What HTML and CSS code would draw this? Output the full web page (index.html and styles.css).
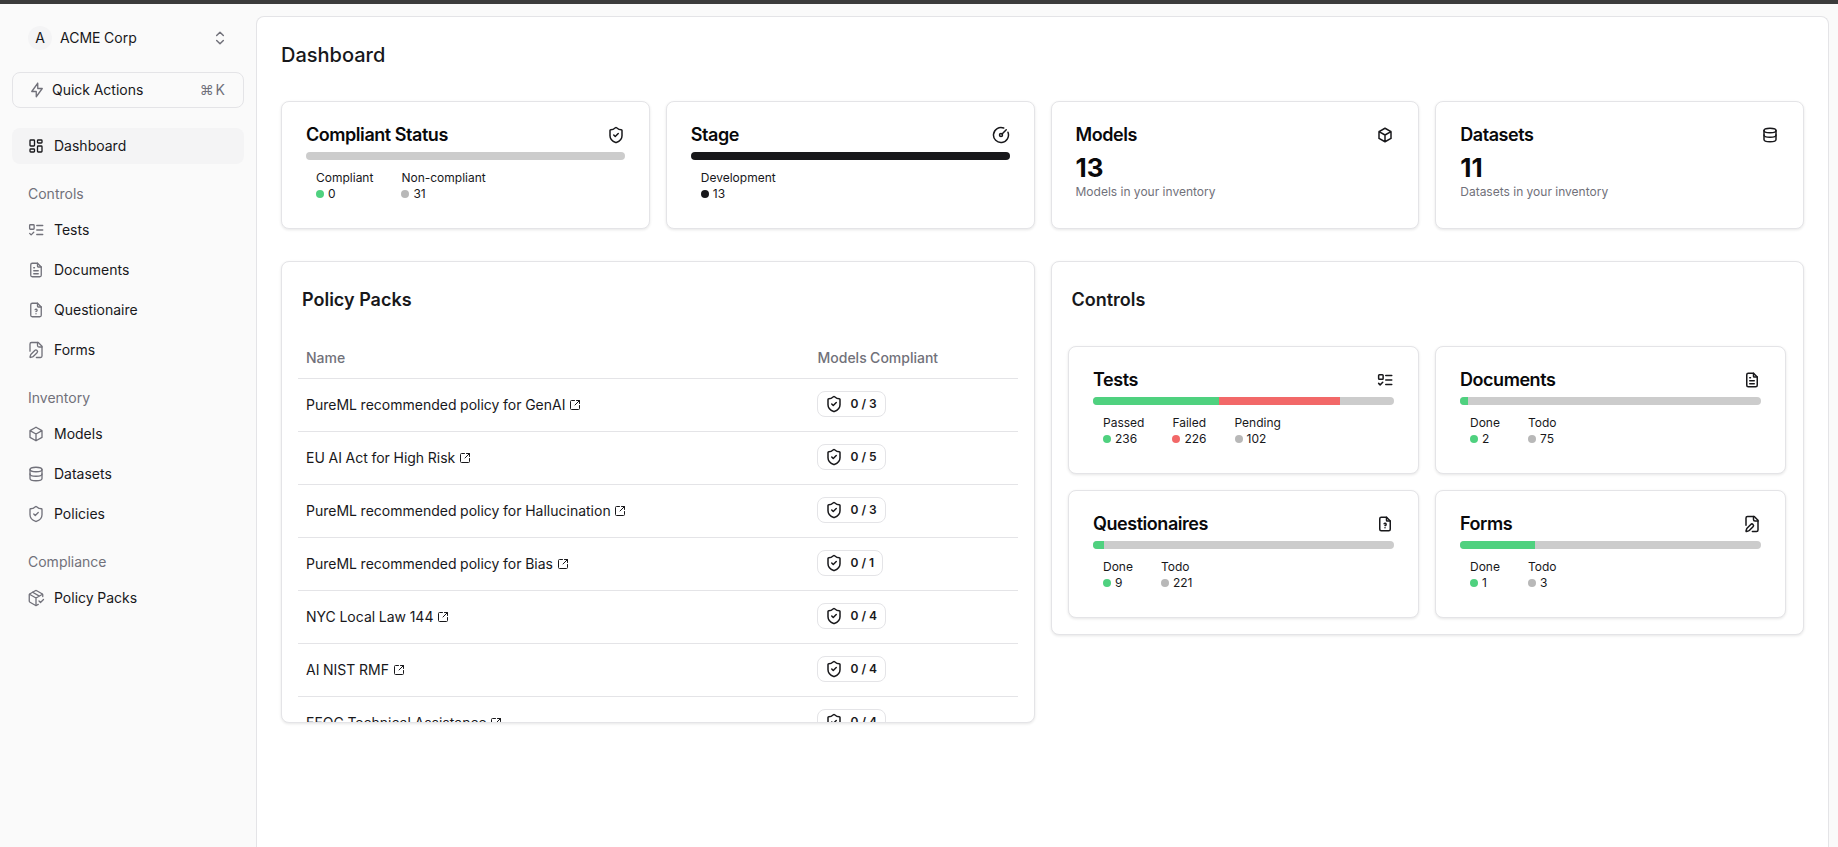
FILE: index.html
```html
<!DOCTYPE html>
<html lang="en">
<head>
  <meta charset="UTF-8">
  <title>Dashboard</title>
  <link rel="stylesheet" href="styles.css">
</head>
<body>
  <svg class="sprite" xmlns="http://www.w3.org/2000/svg">
    <symbol id="i-selector" viewBox="0 0 24 24"><path d="M8 9l4-4 4 4M16 15l-4 4-4-4"/></symbol>
    <symbol id="i-bolt" viewBox="0 0 24 24"><path d="M13 3v7h6l-8 11v-7H5l8-11"/></symbol>
    <symbol id="i-dashboard" viewBox="0 0 24 24"><rect x="4" y="4" width="6" height="8" rx="1"/><rect x="4" y="16" width="6" height="4" rx="1"/><rect x="14" y="12" width="6" height="8" rx="1"/><rect x="14" y="4" width="6" height="4" rx="1"/></symbol>
    <symbol id="i-tests" viewBox="0 0 24 24"><rect x="3.5" y="5" width="6" height="6" rx="1"/><path d="M3.5 16.5l2 2 3.5-3.5M13 6h8M13 12h8M13 18h8"/></symbol>
    <symbol id="i-file-text" viewBox="0 0 24 24"><path d="M14 3v4a1 1 0 0 0 1 1h4"/><path d="M17 21H7a2 2 0 0 1-2-2V5a2 2 0 0 1 2-2h7l5 5v11a2 2 0 0 1-2 2z"/><path d="M9 9h1M9 13h6M9 17h6"/></symbol>
    <symbol id="i-file-help" viewBox="0 0 24 24"><path d="M14 3v4a1 1 0 0 0 1 1h4"/><path d="M17 21H7a2 2 0 0 1-2-2V5a2 2 0 0 1 2-2h7l5 5v11a2 2 0 0 1-2 2z"/><path d="M12 17v.01M12 14a1.5 1.5 0 1 0-1.14-2.474"/></symbol>
    <symbol id="i-file-pen" viewBox="0 0 24 24"><path d="M12.5 22H18a2 2 0 0 0 2-2V7l-5-5H6a2 2 0 0 0-2 2v9.5"/><path d="M14 2v4a2 2 0 0 0 2 2h4"/><path d="M13.378 15.626a1 1 0 1 0-3.004-3.004l-5.01 5.012a2 2 0 0 0-.506.854l-.837 2.87a.5.5 0 0 0 .62.62l2.87-.837a2 2 0 0 0 .854-.506z"/></symbol>
    <symbol id="i-box" viewBox="0 0 24 24"><path d="M12 3l8 4.5v9L12 21l-8-4.5v-9L12 3M12 12l8-4.5M12 12v9M12 12L4 7.5"/></symbol>
    <symbol id="i-database" viewBox="0 0 24 24"><ellipse cx="12" cy="6" rx="8" ry="3"/><path d="M4 6v6a8 3 0 0 0 16 0V6"/><path d="M4 12v6a8 3 0 0 0 16 0v-6"/></symbol>
    <symbol id="i-shield" viewBox="0 0 24 24"><path d="M20 13c0 5-3.5 7.5-7.66 8.95a1 1 0 0 1-.67-.01C7.5 20.5 4 18 4 13V6a1 1 0 0 1 1-1c2 0 4.5-1.2 6.24-2.72a1.17 1.17 0 0 1 1.52 0C14.51 3.81 17 5 19 5a1 1 0 0 1 1 1z"/><path d="M9 12l2 2 4-4"/></symbol>
    <symbol id="i-package" viewBox="0 0 24 24"><path d="M16 16l2 2 4-4"/><path d="M21 10V8a2 2 0 0 0-1-1.73l-7-4a2 2 0 0 0-2 0l-7 4A2 2 0 0 0 3 8v8a2 2 0 0 0 1 1.73l7 4a2 2 0 0 0 2 0l2-1.14"/><path d="M7.5 4.27l9 5.15M3.29 7L12 12l8.71-5M12 22V12"/></symbol>
    <symbol id="i-gauge" viewBox="0 0 24 24"><path d="M15.6 2.7a10 10 0 1 0 5.7 5.7"/><circle cx="12" cy="12" r="2"/><path d="M13.4 10.6L19 5"/></symbol>
    <symbol id="i-external" viewBox="0 0 24 24"><path d="M21 13v6a2 2 0 0 1-2 2H5a2 2 0 0 1-2-2V5a2 2 0 0 1 2-2h6"/><path d="M21 3l-9 9M15 3h6v6"/></symbol>
  </svg>

  <div class="topbar"></div>
  <div class="layout">
    <aside class="sidebar">
      <div class="org">
        <span class="avatar">A</span>
        <span class="org-name">ACME Corp</span>
        <svg class="icon org-toggle"><use href="#i-selector"/></svg>
      </div>
      <div class="quick">
        <svg class="icon quick-icon"><use href="#i-bolt"/></svg>
        <span class="quick-label">Quick Actions</span>
        <span class="quick-keys">⌘ K</span>
      </div>
      <a class="nav-item active"><svg class="icon"><use href="#i-dashboard"/></svg>Dashboard</a>

      <div class="nav-label">Controls</div>
      <a class="nav-item"><svg class="icon"><use href="#i-tests"/></svg>Tests</a>
      <a class="nav-item"><svg class="icon"><use href="#i-file-text"/></svg>Documents</a>
      <a class="nav-item"><svg class="icon"><use href="#i-file-help"/></svg>Questionaire</a>
      <a class="nav-item"><svg class="icon"><use href="#i-file-pen"/></svg>Forms</a>

      <div class="nav-label">Inventory</div>
      <a class="nav-item"><svg class="icon"><use href="#i-box"/></svg>Models</a>
      <a class="nav-item"><svg class="icon"><use href="#i-database"/></svg>Datasets</a>
      <a class="nav-item"><svg class="icon"><use href="#i-shield"/></svg>Policies</a>

      <div class="nav-label">Compliance</div>
      <a class="nav-item"><svg class="icon"><use href="#i-package"/></svg>Policy Packs</a>
    </aside>

    <main class="panel">
      <h1 class="page-title">Dashboard</h1>

      <section class="stats">
        <div class="card">
          <div class="card-head"><h3>Compliant Status</h3><svg class="icon"><use href="#i-shield"/></svg></div>
          <div class="bar"></div>
          <div class="legend">
            <div><span class="legend-name">Compliant</span><span class="legend-val"><i class="dot green"></i>0</span></div>
            <div><span class="legend-name">Non-compliant</span><span class="legend-val"><i class="dot grey"></i>31</span></div>
          </div>
        </div>
        <div class="card">
          <div class="card-head"><h3>Stage</h3><svg class="icon"><use href="#i-gauge"/></svg></div>
          <div class="bar"><span class="seg dark" style="width:100%"></span></div>
          <div class="legend">
            <div><span class="legend-name">Development</span><span class="legend-val"><i class="dot dark"></i>13</span></div>
          </div>
        </div>
        <div class="card">
          <div class="card-head"><h3>Models</h3><svg class="icon"><use href="#i-box"/></svg></div>
          <div class="big">13</div>
          <div class="sub">Models in your inventory</div>
        </div>
        <div class="card">
          <div class="card-head"><h3>Datasets</h3><svg class="icon"><use href="#i-database"/></svg></div>
          <div class="big">11</div>
          <div class="sub">Datasets in your inventory</div>
        </div>
      </section>

      <section class="columns">
        <div class="card packs">
          <h2 class="section-title">Policy Packs</h2>
          <table class="packs-table">
            <thead>
              <tr><th>Name</th><th class="col-models">Models Compliant</th></tr>
            </thead>
            <tbody>
              <tr><td>PureML recommended policy for GenAI <svg class="icon ext"><use href="#i-external"/></svg></td><td><span class="pill"><svg class="icon"><use href="#i-shield"/></svg>0 / 3</span></td></tr>
              <tr><td>EU AI Act for High Risk <svg class="icon ext"><use href="#i-external"/></svg></td><td><span class="pill"><svg class="icon"><use href="#i-shield"/></svg>0 / 5</span></td></tr>
              <tr><td>PureML recommended policy for Hallucination <svg class="icon ext"><use href="#i-external"/></svg></td><td><span class="pill"><svg class="icon"><use href="#i-shield"/></svg>0 / 3</span></td></tr>
              <tr><td>PureML recommended policy for Bias <svg class="icon ext"><use href="#i-external"/></svg></td><td><span class="pill"><svg class="icon"><use href="#i-shield"/></svg>0 / 1</span></td></tr>
              <tr><td>NYC Local Law 144 <svg class="icon ext"><use href="#i-external"/></svg></td><td><span class="pill"><svg class="icon"><use href="#i-shield"/></svg>0 / 4</span></td></tr>
              <tr><td>AI NIST RMF <svg class="icon ext"><use href="#i-external"/></svg></td><td><span class="pill"><svg class="icon"><use href="#i-shield"/></svg>0 / 4</span></td></tr>
              <tr><td>EEOC Technical Assistance <svg class="icon ext"><use href="#i-external"/></svg></td><td><span class="pill"><svg class="icon"><use href="#i-shield"/></svg>0 / 4</span></td></tr>
            </tbody>
          </table>
        </div>

        <div class="card controls">
          <h2 class="section-title">Controls</h2>
          <div class="controls-grid">
            <div class="card">
              <div class="card-head"><h3>Tests</h3><svg class="icon"><use href="#i-tests"/></svg></div>
              <div class="bar"><span class="seg green" style="width:41.8%"></span><span class="seg red" style="width:40.1%"></span></div>
              <div class="legend">
                <div><span class="legend-name">Passed</span><span class="legend-val"><i class="dot green"></i>236</span></div>
                <div><span class="legend-name">Failed</span><span class="legend-val"><i class="dot red"></i>226</span></div>
                <div><span class="legend-name">Pending</span><span class="legend-val"><i class="dot grey"></i>102</span></div>
              </div>
            </div>
            <div class="card">
              <div class="card-head"><h3>Documents</h3><svg class="icon"><use href="#i-file-text"/></svg></div>
              <div class="bar"><span class="seg green" style="width:2.6%"></span></div>
              <div class="legend">
                <div><span class="legend-name">Done</span><span class="legend-val"><i class="dot green"></i>2</span></div>
                <div><span class="legend-name">Todo</span><span class="legend-val"><i class="dot grey"></i>75</span></div>
              </div>
            </div>
            <div class="card">
              <div class="card-head"><h3>Questionaires</h3><svg class="icon"><use href="#i-file-help"/></svg></div>
              <div class="bar"><span class="seg green" style="width:3.7%"></span></div>
              <div class="legend">
                <div><span class="legend-name">Done</span><span class="legend-val"><i class="dot green"></i>9</span></div>
                <div><span class="legend-name">Todo</span><span class="legend-val"><i class="dot grey"></i>221</span></div>
              </div>
            </div>
            <div class="card">
              <div class="card-head"><h3>Forms</h3><svg class="icon"><use href="#i-file-pen"/></svg></div>
              <div class="bar"><span class="seg green" style="width:25%"></span></div>
              <div class="legend">
                <div><span class="legend-name">Done</span><span class="legend-val"><i class="dot green"></i>1</span></div>
                <div><span class="legend-name">Todo</span><span class="legend-val"><i class="dot grey"></i>3</span></div>
              </div>
            </div>
          </div>
        </div>
      </section>
    </main>
  </div>
</body>
</html>
```

FILE: styles.css
```css
* { box-sizing: border-box; }
html, body { height: 100%; }
body { margin: 0; overflow: hidden; background: #fafafa; color: #18181b; font-family: Inter, "Noto Sans", sans-serif; font-size: 14px; line-height: 20px; word-spacing: -0.3px; }
h1, h2, h3 { margin: 0; }
.sprite { display: none; }

.icon { width: 18px; height: 18px; flex: none; fill: none; stroke: currentColor; stroke-width: 2; stroke-linecap: round; stroke-linejoin: round; }

.topbar { height: 4px; background: #3b3b3b; }
.layout { display: flex; height: calc(100% - 4px); }

/* sidebar */
.sidebar { width: 256px; flex: none; padding: 0 12px; }
.org { display: flex; align-items: center; height: 24px; margin-top: 22px; padding: 0 14px 0 16px; }
.avatar { width: 24px; height: 24px; border-radius: 50%; background: #f4f4f5; display: flex; align-items: center; justify-content: center; }
.org-name { margin-left: 8px; }
.org-toggle { width: 20px; height: 20px; margin-left: auto; color: #71717a; stroke-width: 1.75; }
.quick { display: flex; align-items: center; height: 36px; margin: 22px 0 20px; padding: 0 18px 0 15px; border: 1px solid #e4e4e7; border-radius: 8px; }
.quick-icon { color: #71717a; stroke-width: 1.75; }
.quick-label { margin-left: 6px; }
.quick-keys { margin-left: auto; color: #71717a; word-spacing: -2px; }
.nav-item { display: flex; align-items: center; gap: 9px; height: 36px; margin-bottom: 4px; padding: 0 15px; border-radius: 8px; }
.nav-item .icon { color: #71717a; stroke-width: 1.75; }
.nav-item.active { background: #f4f4f5; }
.nav-item.active .icon { color: #18181b; }
.nav-label { height: 24px; margin: 18px 0 6px; padding: 0 16px; line-height: 24px; color: #71717a; }

/* main panel */
.panel { flex: 1; margin: 12px 9px 0 0; padding: 0 24px; background: #fff; border: 1px solid #e4e4e7; border-bottom: 0; border-radius: 8px 8px 0 0; overflow: hidden; }
.page-title { margin-top: 26px; font-size: 20px; line-height: 24px; font-weight: 500; word-spacing: 0; }

.card { background: #fff; border: 1px solid #e4e4e7; border-radius: 8px; box-shadow: 0 1px 3px rgba(0, 0, 0, .1); }
.stats .card, .controls-grid .card { height: 128px; padding: 21px 24px 0; }
.stats { display: grid; grid-template-columns: repeat(4, 1fr); gap: 16px; margin-top: 34px; }
.card-head { display: flex; align-items: center; justify-content: space-between; height: 24px; margin-bottom: 5px; }
.card-head h3 { font-size: 18px; line-height: 24px; font-weight: 600; letter-spacing: -0.45px; word-spacing: 0; color: #09090b; }

.bar { display: flex; height: 8px; border-radius: 4px; background: #cccccc; overflow: hidden; }
.seg { display: block; height: 100%; }
.green { background: #4fd17f; }
.red { background: #f26868; }
.grey { background: #b8b8b8; }
.dark { background: #18181b; }

.legend { display: flex; gap: 28px; margin-top: 10px; padding-left: 10px; font-size: 12px; line-height: 16px; }
.legend-name, .legend-val { display: block; }
.legend-val { display: flex; align-items: center; gap: 4px; }
.dot { width: 8px; height: 8px; border-radius: 50%; }

.big { font-size: 26px; line-height: 32px; font-weight: 700; color: #09090b; }
.sub { font-size: 12px; line-height: 16px; color: #71717a; word-spacing: 0; }

.columns { display: grid; grid-template-columns: 1fr 1fr; gap: 16px; margin-top: 32px; align-items: start; }
.section-title { font-size: 18px; line-height: 24px; font-weight: 600; word-spacing: 0; }

.packs { height: 462px; padding: 26px 16px 0; overflow: hidden; }
.packs .section-title { padding-left: 4px; margin-bottom: 26px; }
.packs-table { width: 100%; border-collapse: collapse; table-layout: fixed; }
.packs-table th { height: 40px; padding: 0 8px; text-align: left; font-weight: 500; color: #71717a; border-bottom: 1px solid #e4e4e7; }
.packs-table td { height: 53px; padding: 0 8px; border-bottom: 1px solid #e4e4e7; }
.col-models { width: 208px; }
.ext { width: 12px; height: 12px; vertical-align: -1px; }
.pill { display: inline-flex; align-items: center; gap: 8px; height: 26px; margin-left: -1px; padding: 0 8px 0 7px; border: 1px solid #e4e4e7; border-radius: 8px; font-size: 12px; font-weight: 600; word-spacing: 0; }

.controls { padding: 26px 17px 16px 16.5px; }
.controls .section-title { padding-left: 3.5px; margin-bottom: 34px; }
.controls-grid { display: grid; grid-template-columns: 1fr 1fr; gap: 16px; }
```
